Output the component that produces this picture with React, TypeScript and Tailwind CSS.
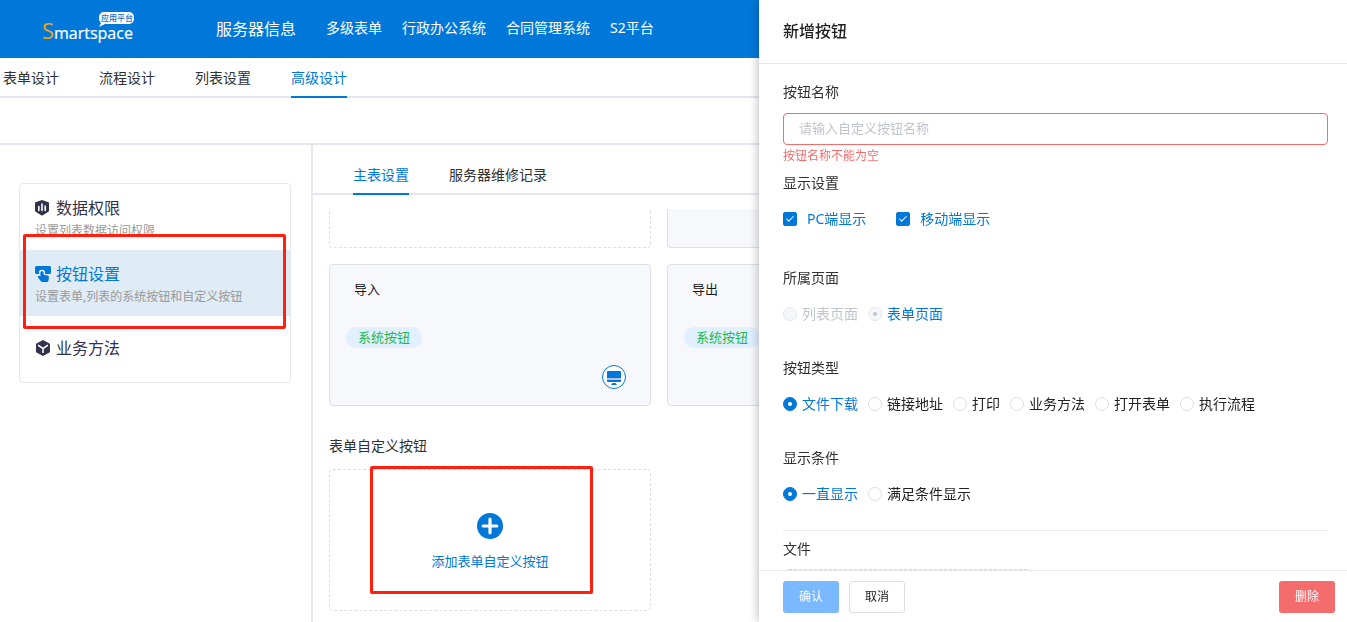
import { useState, type ReactNode } from "react"
import { Check } from "lucide-react"
import clsx from "clsx"

const apps = ["多级表单", "行政办公系统", "合同管理系统", "S2平台"]
const designTabs = ["表单设计", "流程设计", "列表设置", "高级设计"]
const tableTabs = ["主表设置", "服务器维修记录"]
const buttonTypes = ["文件下载", "链接地址", "打印", "业务方法", "打开表单", "执行流程"]
const conditions = ["一直显示", "满足条件显示"]
const pages = ["列表页面", "表单页面"]

function Logo() {
  return (
    <svg width="96" height="36" viewBox="0 0 96 36" className="shrink-0" role="img" aria-label="Smartspace 应用平台">
      <text x="0" y="28" fontSize="22" fill="#eda41b" fontFamily="'Open Sans', sans-serif">S</text>
      <text x="12" y="28" fontSize="16" fill="#fff" stroke="#fff" strokeWidth="0.2" fontFamily="'Open Sans', sans-serif">martspace</text>
      <path d="M62 1h25a5 5 0 0 1 5 5v2a5 5 0 0 1-5 5H63l-6 3 2-4a5 5 0 0 1-2-4V6a5 5 0 0 1 5-5Z" fill="#fff" />
      <text x="59" y="10" fontSize="8" fontWeight="500" fill="#0f6fc9" fontFamily="'Noto Sans CJK SC', sans-serif">应用平台</text>
    </svg>
  )
}

function ShieldIcon() {
  return (
    <svg width="16" height="16" viewBox="0 0 16 16" aria-hidden="true">
      <path d="M7 0 13.4 2.2a.8.8 0 0 1 .6.8v7.4a2 2 0 0 1-1 1.7L7.8 15.3a1.6 1.6 0 0 1-1.6 0L1 12.1a2 2 0 0 1-1-1.7V3a.8.8 0 0 1 .6-.8Z" fill="#32324d" />
      <path d="M3.800 6.500v4M7 4v6.500M10.200 6v4.500" stroke="#fff" strokeWidth="1.600" strokeLinecap="round" />
    </svg>
  )
}

function TapIcon() {
  return (
    <svg width="16" height="16" viewBox="0 0 16 16" aria-hidden="true">
      <path d="M1.500 0h13A1.500 1.500 0 0 1 16 1.500v5A1.500 1.500 0 0 1 14.500 8H10V6.800a3 3 0 0 0-6 0V8H1.500A1.500 1.500 0 0 1 0 6.500v-5A1.500 1.500 0 0 1 1.500 0Z" fill="#0078d9" />
      <path
        d="M5.400 6.600a1.600 1.600 0 0 1 3.200 0v2.200l3.900.8c1 .2 1.500.9 1.400 1.900l-.4 2.700c-.2 1.300-.8 1.800-2 1.800H7.400c-.8 0-1.300-.3-1.700-1L3 11.400c-.6-1.100.5-2.100 1.500-1.500l.9.500Z"
        fill="#0078d9"
      />
      <path d="M4.500 7.500v-.7a2.500 2.500 0 0 1 5 0v.7" fill="none" stroke="#fff" strokeWidth="1" />
    </svg>
  )
}

function CubeIcon() {
  return (
    <svg width="16" height="16" viewBox="0 0 16 16" aria-hidden="true">
      <path d="M8 0 14.500 3.400a1 1 0 0 1 .5.9v7.200a1 1 0 0 1-.5.9L8 16l-6.500-3.600a1 1 0 0 1-.5-.9V4.300a1 1 0 0 1 .5-.9Z" fill="#32324d" />
      <path d="m3 5.200 5 3.300 5-3.300M8 8.500V13" fill="none" stroke="#fff" strokeWidth="1.500" />
    </svg>
  )
}

function MonitorIcon() {
  return (
    <svg width="24" height="24" viewBox="0 0 24 24" className="absolute right-6 bottom-4" aria-hidden="true">
      <circle cx="12" cy="12" r="11.500" fill="#fff" stroke="#0078d9" />
      <path d="M6 6h12a1 1 0 0 1 1 1v6H5V7a1 1 0 0 1 1-1Z" fill="#0078d9" />
      <path d="M5 13h14v2H5Z" fill="#b9bfe6" />
      <path d="M5 15h14v1a1 1 0 0 1-1 1H6a1 1 0 0 1-1-1Z" fill="#0078d9" />
      <path d="M10.500 18h3l1.500 2H9Z" fill="#0078d9" />
    </svg>
  )
}

function PlusIcon() {
  return (
    <svg width="26" height="26" viewBox="0 0 26 26" aria-hidden="true">
      <circle cx="13" cy="13" r="13" fill="#0078d9" />
      <path d="M13 6.200v13.600M6.200 13h13.600" stroke="#fff" strokeWidth="3.200" strokeLinecap="round" />
    </svg>
  )
}

function Tabs({ items, initial }: { items: string[]; initial: number }) {
  const [active, setActive] = useState(initial)
  return (
    <>
      {items.map((item, i) => (
        <button
          key={item}
          type="button"
          onClick={() => setActive(i)}
          className={clsx(
            "-mb-0.5 h-10 whitespace-nowrap border-b-2 text-sm leading-10",
            i === active ? "border-[#0078d9] text-[#0078d9]" : "border-transparent text-[#303133]"
          )}
        >
          {item}
        </button>
      ))}
    </>
  )
}

function MenuItem({ icon, title, note, active }: { icon: ReactNode; title: string; note?: string; active?: boolean }) {
  return (
    <a
      href="#"
      className={clsx("flex h-[66px] flex-col justify-center px-[15px]", note ? "pt-1" : "pb-0.5", active && "bg-[#dfebf5]")}
    >
      <span className={clsx("flex items-center gap-[5px] text-base leading-6", active ? "text-[#0078d9]" : "text-[#32324d]")}>
        {icon}
        {title}
      </span>
      {note && <span className="text-xs leading-[22px] text-[#999]">{note}</span>}
    </a>
  )
}

function SystemButtonCard({ name }: { name: string }) {
  return (
    <div className="relative h-[142px] rounded border border-[#dcdfe6] bg-[#f7f8fc] px-4 pt-3.5">
      <h3 className="pl-2 text-[13px] leading-5 text-[#1a1a1a]">{name}</h3>
      <span className="mt-7 inline-block rounded-full bg-[#e1f0ff] px-3 text-[13px] leading-[21px] text-[#1fb84f]">系统按钮</span>
      <MonitorIcon />
    </div>
  )
}

function RadioRow({ legend, name, options, initial, disabled }: { legend: string; name: string; options: string[]; initial: string; disabled?: boolean }) {
  const [value, setValue] = useState(initial)
  return (
    <fieldset>
      <legend className="text-sm leading-8">{legend}</legend>
      <div className="mt-1 flex h-8 items-center gap-2.5">
        {options.map((option) => (
          <label
            key={option}
            className={clsx(
              "flex items-center gap-[5px] whitespace-nowrap text-sm leading-5",
              option === value ? "text-[#0078d9]" : disabled ? "text-[#c0c4cc]" : "text-[#222]"
            )}
          >
            <input
              type="radio"
              name={name}
              checked={option === value}
              disabled={disabled}
              onChange={() => setValue(option)}
              className="grid size-3.5 appearance-none place-content-center rounded-full border border-[#dcdfe6] bg-white before:size-1 before:rounded-full checked:border-[#0078d9] checked:bg-[#0078d9] checked:before:bg-white disabled:border-[#e4e7ed] disabled:bg-[#f5f7fa] checked:disabled:before:bg-[#c0c4cc]"
            />
            {option}
          </label>
        ))}
      </div>
    </fieldset>
  )
}

function CheckOption({ label }: { label: string }) {
  return (
    <label className="flex items-center gap-2.5 text-sm leading-5 text-[#0078d9]">
      <span className="grid place-items-center">
        <input
          type="checkbox"
          defaultChecked
          className="peer col-start-1 row-start-1 size-3.5 appearance-none rounded-xs border border-[#dcdfe6] checked:border-[#0078d9] checked:bg-[#0078d9]"
        />
        <Check className="pointer-events-none invisible col-start-1 row-start-1 size-2.5 text-white peer-checked:visible" strokeWidth={2.5} />
      </span>
      {label}
    </label>
  )
}

function ButtonDrawer() {
  return (
    <section
      role="dialog"
      aria-labelledby="drawer-title"
      className="fixed inset-y-0 right-0 flex w-[588px] max-w-full flex-col bg-white text-[#303133] shadow-[0_0_10px_rgba(0,0,0,0.3)]"
    >
      <header className="flex h-16 shrink-0 items-center border-b border-[#e4e7ed] px-6 pb-0.5">
        <h2 id="drawer-title" className="text-base font-medium text-[#1f1f1f]">新增按钮</h2>
      </header>

      <form className="min-h-0 flex-1 overflow-hidden pt-3 pr-[19px] pl-6">
        <label htmlFor="button-name" className="block text-sm leading-8">按钮名称</label>
        <input
          id="button-name"
          type="text"
          placeholder="请输入自定义按钮名称"
          className="mt-[5px] block h-8 w-full rounded border border-[#f56c6c] px-[15px] pb-0.5 text-[13px] outline-none placeholder:text-[#c0c4cc]"
        />
        <p className="text-xs leading-[22px] text-[#f56c6c]">按钮名称不能为空</p>

        <fieldset>
          <legend className="text-sm leading-8">显示设置</legend>
          <div className="mt-1 flex h-8 items-center gap-[30px]">
            <CheckOption label="PC端显示" />
            <CheckOption label="移动端显示" />
          </div>
        </fieldset>

        <div className="mt-[27px] flex flex-col gap-[22px]">
          <RadioRow legend="所属页面" name="page" options={pages} initial="表单页面" disabled />
          <RadioRow legend="按钮类型" name="type" options={buttonTypes} initial="文件下载" />
          <RadioRow legend="显示条件" name="condition" options={conditions} initial="一直显示" />
        </div>

        <div className="mt-5 border-t border-[#e4e7ed] pt-0.5">
          <h3 className="text-sm leading-8">文件</h3>
          <div className="mt-1 h-24 w-[250px] rounded-md border border-dashed border-[#d9d9d9]" />
        </div>
      </form>

      <footer className="flex shrink-0 gap-2.5 border-t border-[#e4e7ed] pt-2.5 pr-3 pb-[9px] pl-6 text-xs">
        <button type="button" className="h-8 w-14 rounded-[3px] bg-[#7ab8ff] text-white">确认</button>
        <button type="button" className="h-8 w-14 rounded-[3px] border border-[#dcdfe6] bg-white text-[#222]">取消</button>
        <button type="button" className="ml-auto h-8 w-14 rounded-[3px] bg-[#f56c6c] text-white">删除</button>
      </footer>
    </section>
  )
}

export default function App() {
  return (
    <div className="flex h-screen flex-col overflow-hidden bg-white font-['Noto_Sans','Noto_Sans_CJK_SC',sans-serif]">
      <header className="flex h-[58px] shrink-0 items-center bg-[#0078d9] pl-[42px] text-white">
        <Logo />
        <h1 className="ml-[78px] text-base">服务器信息</h1>
        <nav className="ml-[30px] flex gap-5 pb-0.5 text-sm leading-5">
          {apps.map((app) => (
            <a key={app} href="#" className="whitespace-nowrap">{app}</a>
          ))}
        </nav>
      </header>

      <nav className="flex h-10 shrink-0 gap-10 border-b-2 border-[#e4e7ed] pl-[3px]">
        <Tabs items={designTabs} initial={3} />
      </nav>
      <div className="h-[47px] shrink-0 border-b-2 border-[#e4e7ed]" />

      <div className="flex min-h-0 flex-1">
        <aside className="w-[313px] shrink-0 border-r-2 border-[#e4e7ed] pt-[38px] pr-5 pl-[19px]">
          <div className="relative rounded border border-[#e4e7ed]">
            <MenuItem icon={<ShieldIcon />} title="数据权限" note="设置列表数据访问权限" />
            <MenuItem icon={<TapIcon />} title="按钮设置" note="设置表单,列表的系统按钮和自定义按钮" active />
            <MenuItem icon={<CubeIcon />} title="业务方法" />
            <div className="pointer-events-none absolute top-[50px] right-1 left-[3px] h-[95px] rounded-xs border-3 border-[#ff2012]" />
          </div>
        </aside>

        <main className="flex min-w-0 flex-1 flex-col">
          <nav className="flex h-[50px] shrink-0 items-end gap-10 border-b-2 border-[#e4e7ed] pl-10">
            <Tabs items={tableTabs} initial={0} />
          </nav>

          <div className="min-h-0 flex-1 overflow-hidden pt-3.5 pr-5 pl-4">
            <div className="grid grid-cols-3 gap-4">
              <div className="h-[39px] rounded-b border border-t-0 border-dashed border-[#dcdfe6]" />
              <div className="h-[39px] rounded-b border border-t-0 border-[#dcdfe6] bg-[#f7f8fc]" />
              <div className="h-[39px] rounded-b border border-t-0 border-[#dcdfe6] bg-[#f7f8fc]" />
              <SystemButtonCard name="导入" />
              <SystemButtonCard name="导出" />
            </div>

            <h2 className="mt-[30px] text-sm leading-5 text-[#303133]">表单自定义按钮</h2>
            <div className="mt-[13px] grid grid-cols-3 gap-4">
              <div className="relative">
                <button
                  type="button"
                  className="flex h-[142px] w-full flex-col items-center justify-center gap-3 rounded border border-dashed border-[#dcdfe6] pt-[3px] text-[13px] leading-5 text-[#0078d9]"
                >
                  <PlusIcon />
                  添加表单自定义按钮
                </button>
                <div className="pointer-events-none absolute -top-[3px] left-[41px] h-32 w-[223px] rounded-xs border-3 border-[#ff2012]" />
              </div>
            </div>
          </div>
        </main>
      </div>

      <ButtonDrawer />
    </div>
  )
}
